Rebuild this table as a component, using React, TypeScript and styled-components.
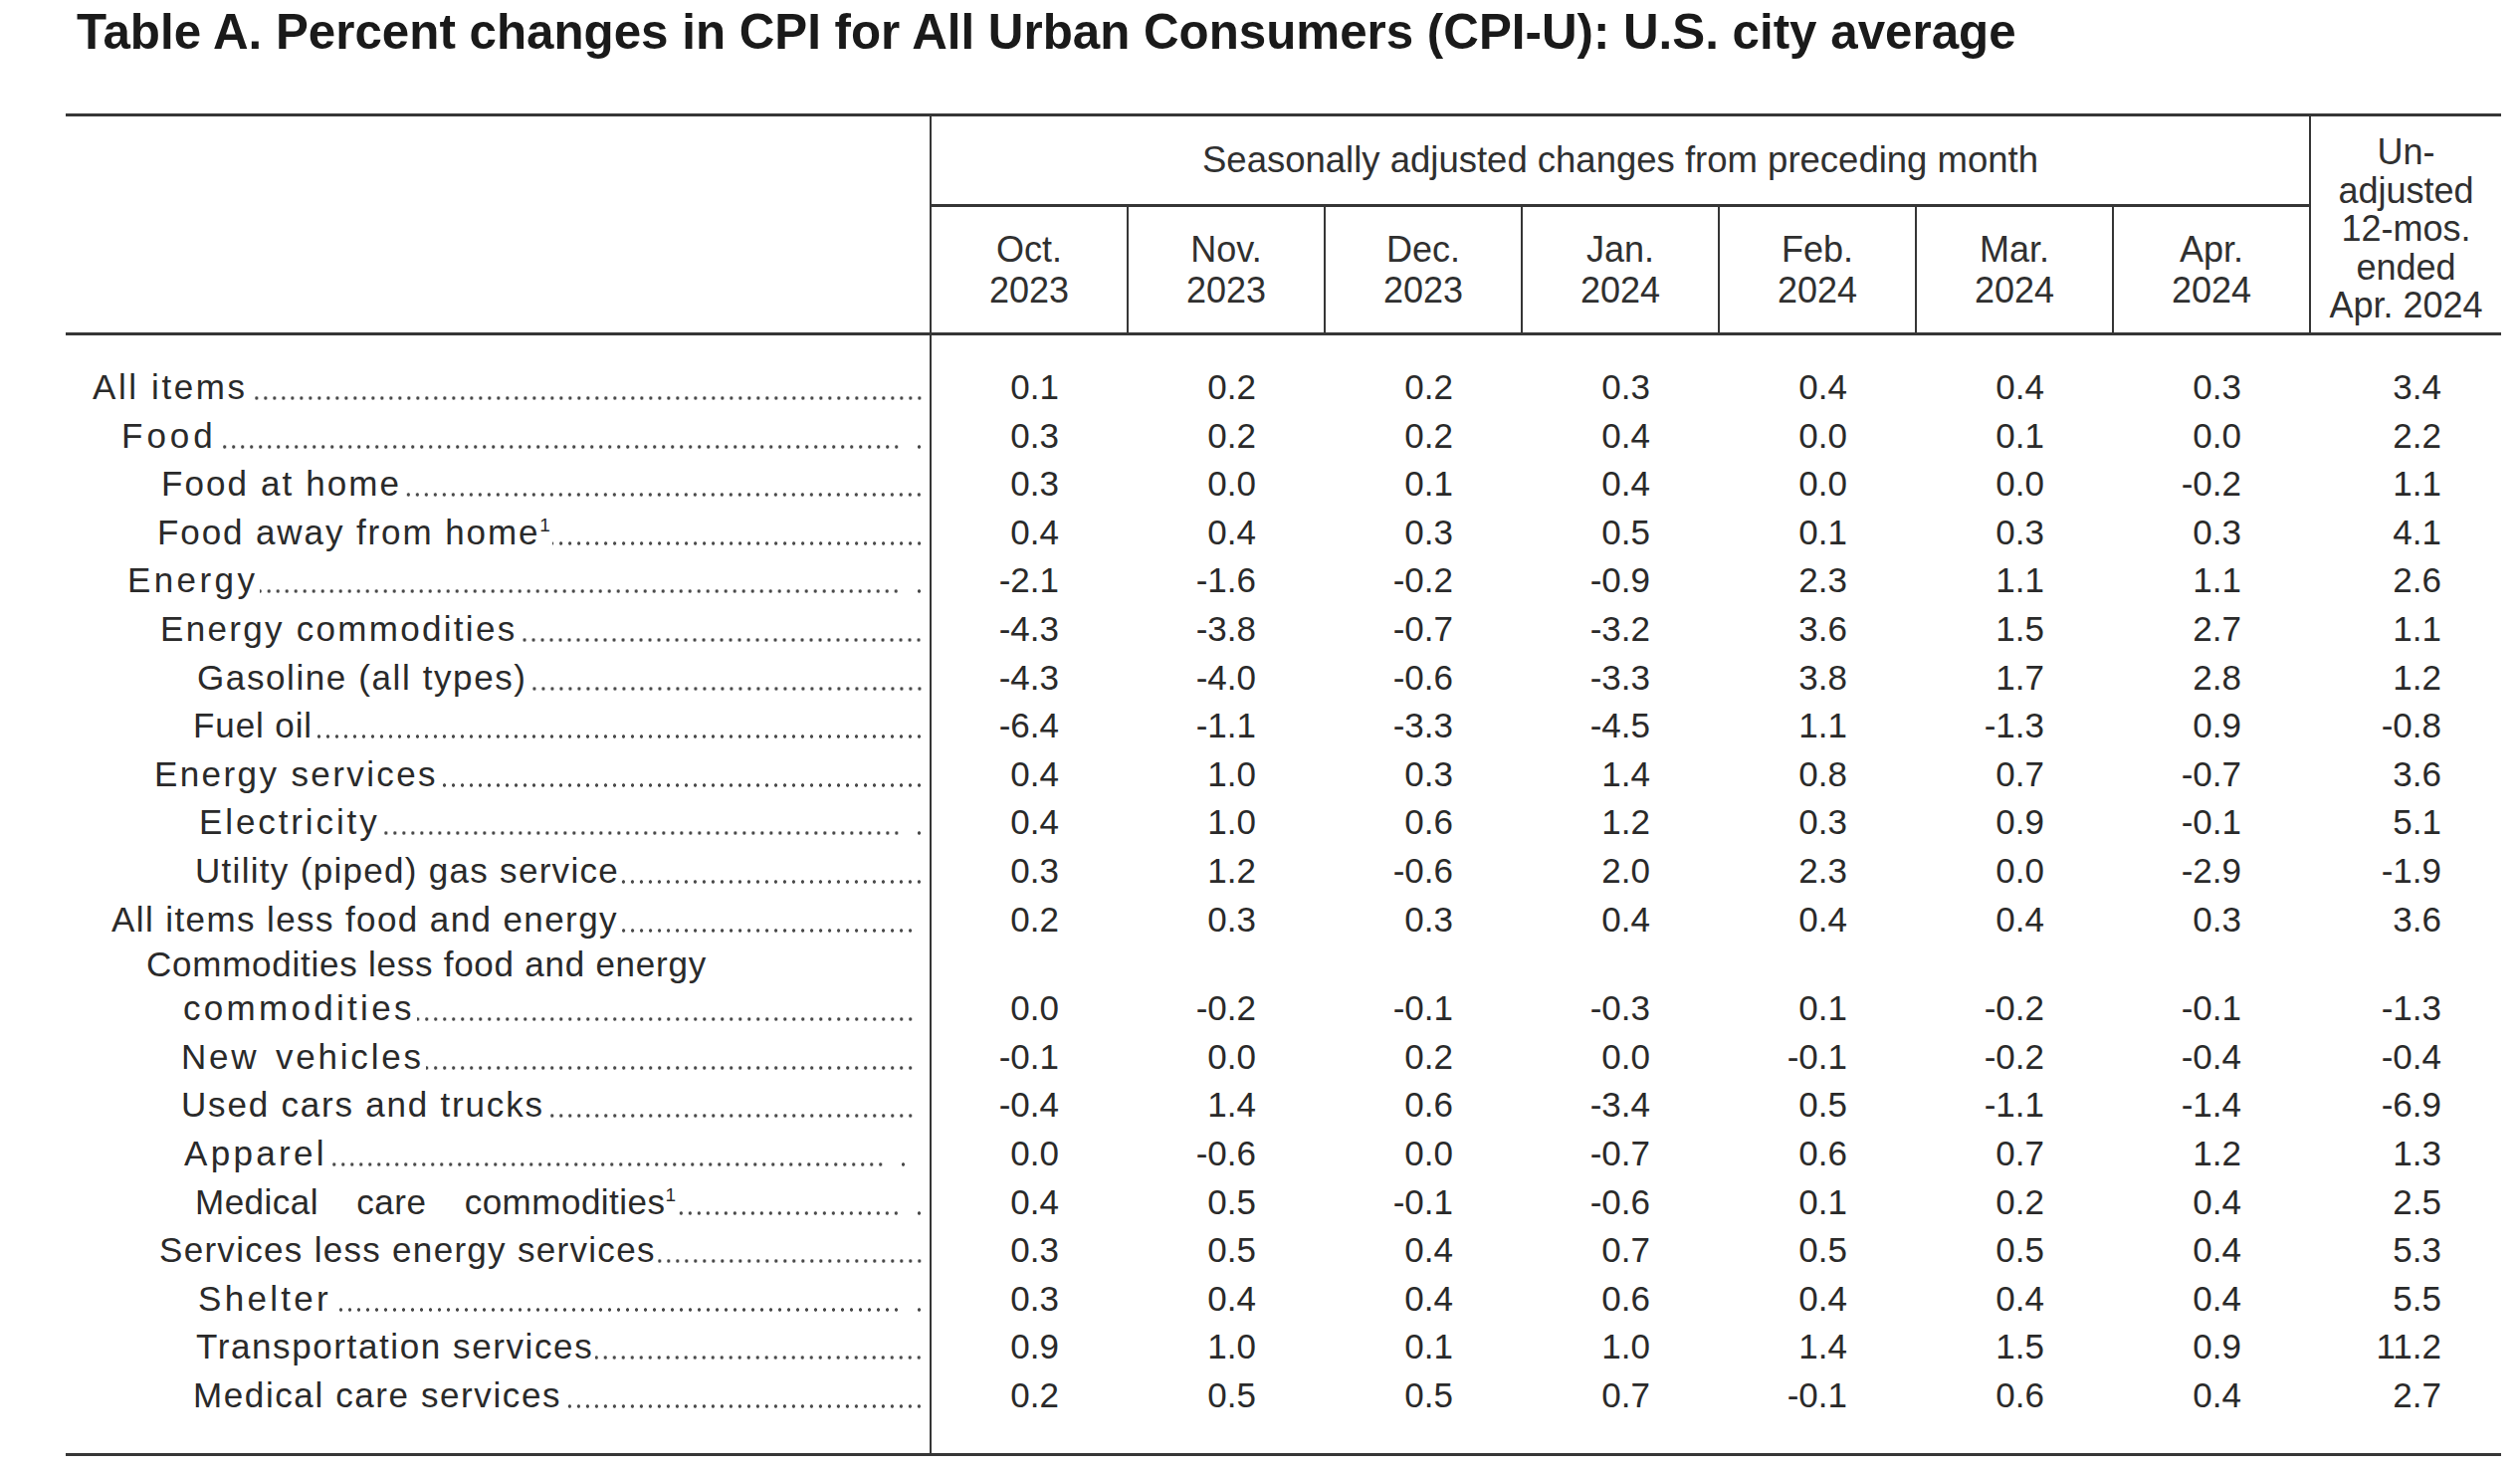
import React from "react";
import styled, { createGlobalStyle } from "styled-components";

const INK = "#2a2a2a";
const RULE = "#363636";
const COLS = "870px repeat(7, 198px) 191px";
const ROW_H = 48.6;
const DOT = "radial-gradient(circle at 4.5px 35px, #4a4a4a 1.4px, rgba(255, 255, 255, 0) 2px)";

const GlobalStyle = createGlobalStyle`
  html, body { margin: 0; padding: 0; background: #ffffff; }
  body { font-family: "Liberation Sans", Arial, Helvetica, sans-serif; color: ${INK}; }
  *, *::before, *::after { box-sizing: border-box; }
`;

const Page = styled.div`
  width: 2532px;
  height: 1476px;
  padding-left: 66px;
  overflow: hidden;
  background: #ffffff;
`;

const Title = styled.h1`
  margin: 3px 0 53px 11px;
  font-size: 49.3px;
  line-height: 58px;
  font-weight: 700;
  color: #1a1a1a;
  white-space: nowrap;
`;

const Frame = styled.div`
  width: 2447px;
  border-top: 3px solid ${RULE};
  border-bottom: 3px solid ${RULE};
`;

const Header = styled.div`
  display: grid;
  grid-template-columns: ${COLS};
  grid-template-rows: 91px 126px;
  border-bottom: 3px solid ${RULE};
  font-size: 36px;
  color: #303030;
`;

const Stub = styled.div`
  grid-column: 1;
  grid-row: 1 / 3;
  border-right: 2px solid ${RULE};
`;

const Group = styled.div`
  grid-column: 2 / 9;
  grid-row: 1;
  border-bottom: 3px solid ${RULE};
  border-right: 2px solid ${RULE};
  display: flex;
  align-items: center;
  justify-content: center;
  font-size: 36.5px;
  white-space: nowrap;
`;

const Month = styled.div`
  grid-row: 2;
  border-right: 2px solid ${RULE};
  display: flex;
  flex-direction: column;
  align-items: center;
  justify-content: center;
  line-height: 41px;
`;

const Unadjusted = styled.div`
  grid-column: 9;
  grid-row: 1 / 3;
  display: flex;
  flex-direction: column;
  align-items: center;
  justify-content: center;
  padding-top: 10px;
  line-height: 38.5px;
  white-space: nowrap;
`;

const Body = styled.div`
  display: flex;
  flex-direction: column;
`;

const Row = styled.div<{ $padTop?: number; $padBottom?: number }>`
  display: grid;
  grid-template-columns: ${COLS};
  align-items: end;
  & > * {
    padding-top: ${(p) => p.$padTop ?? 0}px;
    padding-bottom: ${(p) => p.$padBottom ?? 0}px;
  }
`;

const LabelCell = styled.div`
  align-self: stretch;
  border-right: 2px solid ${RULE};
  display: flex;
  flex-direction: column;
  justify-content: flex-end;
`;

const LabelLine = styled.div<{ $indent: number; $lh: number; $end?: number }>`
  display: flex;
  align-items: baseline;
  padding-left: ${(p) => p.$indent}px;
  padding-right: ${(p) => p.$end ?? 6}px;
  font-size: 35px;
  line-height: ${(p) => p.$lh}px;
  height: ${(p) => p.$lh}px;
  white-space: nowrap;
`;

const LabelText = styled.span<{ $ls: number; $ws?: number }>`
  flex-shrink: 0;
  letter-spacing: ${(p) => p.$ls}px;
  word-spacing: ${(p) => p.$ws ?? 0}px;
`;

const Sup = styled.sup`
  font-size: 19px;
  line-height: 0;
  vertical-align: 13px;
  letter-spacing: 0;
`;

/* dot leader drawn as a repeating dotted pattern, anchored at the right edge */
const Leader = styled.span`
  flex: 1;
  min-width: 0;
  align-self: stretch;
  margin-left: 2px;
  background-image: ${DOT};
  background-size: 9px 100%;
  background-repeat: repeat-x;
  background-position: right top;
`;

/* the detached final dot some leaders end with */
const TailDot = styled.span`
  flex: 0 0 9px;
  align-self: stretch;
  margin-left: 14px;
  background-image: ${DOT};
  background-size: 9px 100%;
  background-repeat: no-repeat;
`;

const Value = styled.div<{ $pr: number }>`
  text-align: right;
  padding-right: ${(p) => p.$pr}px;
  font-size: 35px;
  line-height: ${ROW_H}px;
  white-space: nowrap;
`;

type Item = {
  label: string;
  sup?: boolean;
  indent: number;
  ls: number;
  ws?: number;
  tail?: boolean;
  end?: number;
  lead?: { text: string; indent: number; ls: number };
  values: string[];
};

const ITEMS: Item[] = [
  { label: "All items", indent: 27, ls: 2.6, values: ["0.1", "0.2", "0.2", "0.3", "0.4", "0.4", "0.3", "3.4"] },
  { label: "Food", indent: 56, ls: 4, tail: true, values: ["0.3", "0.2", "0.2", "0.4", "0.0", "0.1", "0.0", "2.2"] },
  { label: "Food at home", indent: 96, ls: 2.1, values: ["0.3", "0.0", "0.1", "0.4", "0.0", "0.0", "-0.2", "1.1"] },
  { label: "Food away from home", sup: true, indent: 92, ls: 1.9, values: ["0.4", "0.4", "0.3", "0.5", "0.1", "0.3", "0.3", "4.1"] },
  { label: "Energy", indent: 62, ls: 3.4, tail: true, values: ["-2.1", "-1.6", "-0.2", "-0.9", "2.3", "1.1", "1.1", "2.6"] },
  { label: "Energy commodities", indent: 95, ls: 2.3, values: ["-4.3", "-3.8", "-0.7", "-3.2", "3.6", "1.5", "2.7", "1.1"] },
  { label: "Gasoline (all types)", indent: 132, ls: 1.6, values: ["-4.3", "-4.0", "-0.6", "-3.3", "3.8", "1.7", "2.8", "1.2"] },
  { label: "Fuel oil", indent: 128, ls: 0.9, values: ["-6.4", "-1.1", "-3.3", "-4.5", "1.1", "-1.3", "0.9", "-0.8"] },
  { label: "Energy services", indent: 89, ls: 2.4, values: ["0.4", "1.0", "0.3", "1.4", "0.8", "0.7", "-0.7", "3.6"] },
  { label: "Electricity", indent: 134, ls: 2.9, tail: true, values: ["0.4", "1.0", "0.6", "1.2", "0.3", "0.9", "-0.1", "5.1"] },
  { label: "Utility (piped) gas service", indent: 130, ls: 1.3, values: ["0.3", "1.2", "-0.6", "2.0", "2.3", "0.0", "-2.9", "-1.9"] },
  { label: "All items less food and energy", indent: 46, ls: 1.4, end: 15, values: ["0.2", "0.3", "0.3", "0.4", "0.4", "0.4", "0.3", "3.6"] },
  {
    label: "commodities",
    indent: 118,
    ls: 3.3,
    end: 15,
    lead: { text: "Commodities less food and energy", indent: 81, ls: 0.75 },
    values: ["0.0", "-0.2", "-0.1", "-0.3", "0.1", "-0.2", "-0.1", "-1.3"],
  },
  { label: "New vehicles", indent: 116, ls: 2.8, ws: 4, end: 15, values: ["-0.1", "0.0", "0.2", "0.0", "-0.1", "-0.2", "-0.4", "-0.4"] },
  { label: "Used cars and trucks", indent: 116, ls: 1.8, end: 15, values: ["-0.4", "1.4", "0.6", "-3.4", "0.5", "-1.1", "-1.4", "-6.9"] },
  { label: "Apparel", indent: 119, ls: 3.3, tail: true, end: 22, values: ["0.0", "-0.6", "0.0", "-0.7", "0.6", "0.7", "1.2", "1.3"] },
  { label: "Medical care commodities", sup: true, indent: 130, ls: 0.5, ws: 28, tail: true, values: ["0.4", "0.5", "-0.1", "-0.6", "0.1", "0.2", "0.4", "2.5"] },
  { label: "Services less energy services", indent: 94, ls: 1.3, values: ["0.3", "0.5", "0.4", "0.7", "0.5", "0.5", "0.4", "5.3"] },
  { label: "Shelter", indent: 133, ls: 3.3, tail: true, values: ["0.3", "0.4", "0.4", "0.6", "0.4", "0.4", "0.4", "5.5"] },
  { label: "Transportation services", indent: 131, ls: 1.6, values: ["0.9", "1.0", "0.1", "1.0", "1.4", "1.5", "0.9", "11.2"] },
  { label: "Medical care services", indent: 128, ls: 1.6, values: ["0.2", "0.5", "0.5", "0.7", "-0.1", "0.6", "0.4", "2.7"] },
];

const MONTHS: [string, string][] = [
  ["Oct.", "2023"],
  ["Nov.", "2023"],
  ["Dec.", "2023"],
  ["Jan.", "2024"],
  ["Feb.", "2024"],
  ["Mar.", "2024"],
  ["Apr.", "2024"],
];

export default function App() {
  return (
    <Page>
      <GlobalStyle />
      <Title>Table A. Percent changes in CPI for All Urban Consumers (CPI-U): U.S. city average</Title>
      <Frame>
        <Header>
          <Stub />
          <Group>Seasonally adjusted changes from preceding month</Group>
          {MONTHS.map(([m, y]) => (
            <Month key={m}>
              <span>{m}</span>
              <span>{y}</span>
            </Month>
          ))}
          <Unadjusted>
            <span>Un-</span>
            <span>adjusted</span>
            <span>12-mos.</span>
            <span>ended</span>
            <span>Apr. 2024</span>
          </Unadjusted>
        </Header>
        <Body>
          {ITEMS.map((item, i) => (
            <Row
              key={item.label + i}
              $padTop={i === 0 ? 28 : 0}
              $padBottom={i === ITEMS.length - 1 ? 34 : 0}
            >
              <LabelCell>
                {item.lead && (
                  <LabelLine $indent={item.lead.indent} $lh={41}>
                    <LabelText $ls={item.lead.ls}>{item.lead.text}</LabelText>
                  </LabelLine>
                )}
                <LabelLine $indent={item.indent} $lh={ROW_H} $end={item.end}>
                  <LabelText $ls={item.ls} $ws={item.ws}>
                    {item.label}
                    {item.sup && <Sup>1</Sup>}
                  </LabelText>
                  <Leader />
                  {item.tail && <TailDot />}
                </LabelLine>
              </LabelCell>
              {item.values.map((v, j) => (
                <Value key={j} $pr={j === 7 ? 60 : 70}>
                  {v}
                </Value>
              ))}
            </Row>
          ))}
        </Body>
      </Frame>
    </Page>
  );
}
